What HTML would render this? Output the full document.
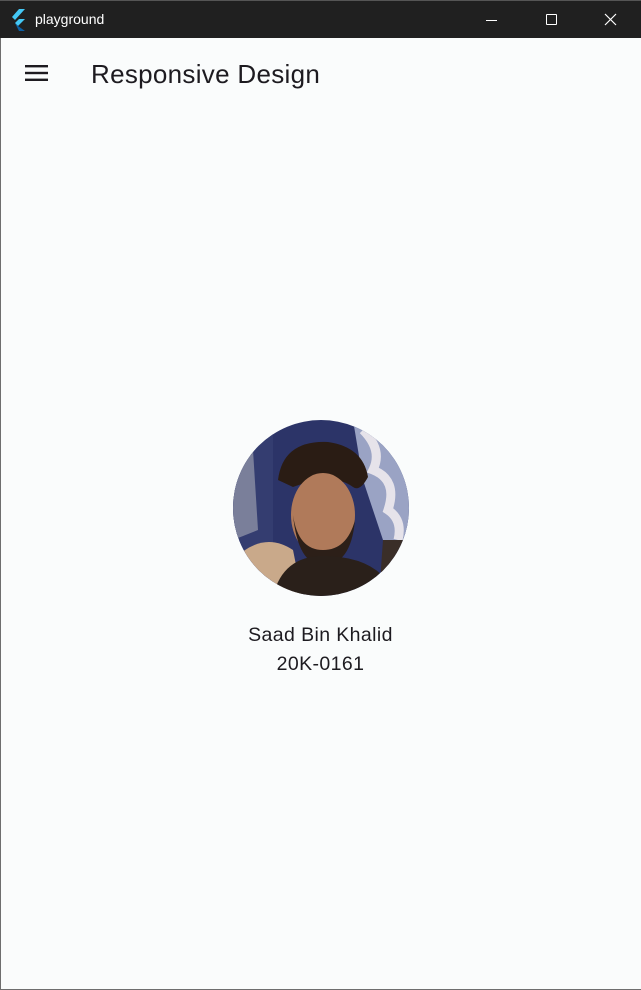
<!DOCTYPE html>
<html><head><meta charset="utf-8"><style>
*{margin:0;padding:0;box-sizing:border-box}
body{width:641px;height:990px;overflow:hidden;background:#fafcfc;font-family:"Liberation Sans",sans-serif;position:relative}
.win{position:absolute;left:0;top:0;width:641px;height:990px;border-left:1px solid #6e6e6e;border-bottom:1px solid #6e6e6e;border-top:1px solid #555}
.tb{position:absolute;left:0;top:0;width:641px;height:38px;background:#202020;border-top:1px solid #555}
.tb .t{position:absolute;left:35px;top:10px;color:#fff;font-size:14px}
.title{position:absolute;left:91px;top:59px;font-size:26px;color:#1d1b20;letter-spacing:0.3px}
.name{position:absolute;left:0;width:641px;text-align:center;font-size:19.5px;color:#1d1b20;letter-spacing:0.4px}
</style></head><body>
<div class="win"></div>
<div class="tb">
<svg style="position:absolute;left:11px;top:8px" width="18" height="22" viewBox="0 0 18 22"><polygon points="8,0 14,0 4,11 1,8" fill="#44c8f5"/><polygon points="8,10 14,10 7,17 4,14" fill="#44c8f5"/><polygon points="4,14 7,17 14,22 8,22" fill="#0b5fa3"/></svg>
<div class="t">playground</div>
<div style="position:absolute;left:486px;top:19px;width:11px;height:1px;background:#fff"></div>
<div style="position:absolute;left:546px;top:13px;width:11px;height:11px;border:1px solid #fff;border-radius:1px"></div>
<svg style="position:absolute;left:604px;top:12px" width="13" height="13"><path d="M1 1L12 12M12 1L1 12" stroke="#fff" stroke-width="1.2"/></svg>
</div>
<svg style="position:absolute;left:25px;top:65px" width="23" height="16"><rect x="0" y="0" width="23" height="2.4" fill="#1d1b20"/><rect x="0" y="6.8" width="23" height="2.4" fill="#1d1b20"/><rect x="0" y="13.6" width="23" height="2.4" fill="#1d1b20"/></svg>
<div class="title">Responsive Design</div>
<svg style="position:absolute;left:233px;top:420px" width="176" height="176" viewBox="0 0 176 176">
<defs><clipPath id="c"><circle cx="88" cy="88" r="88"/></clipPath></defs>
<g clip-path="url(#c)">
<rect width="176" height="176" fill="#2c3468"/>
<rect x="0" y="0" width="40" height="176" fill="#343d70"/>
<path d="M120 0 L176 0 L176 130 L150 120 L130 60 Z" fill="#9aa3c4"/>
<path d="M130 10 q20 20 10 40 q25 10 15 40 q15 10 10 30" stroke="#e6e3ea" stroke-width="9" fill="none"/>
<path d="M150 0 q5 30 25 40" stroke="#e0dde6" stroke-width="7" fill="none"/>
<path d="M0 40 L20 30 L25 110 L0 120Z" fill="#7a7f9a"/>
<path d="M45 60 q5 -40 50 -38 q35 5 40 35 q-8 15 -15 10 q-20 -15 -60 0 z" fill="#2a1c14"/>
<ellipse cx="90" cy="95" rx="32" ry="42" fill="#b07a5a"/>
<path d="M60 95 q5 50 30 50 q28 0 32 -45 q-8 30 -32 30 q-25 0 -30 -35z" fill="#2c1f18"/>
<path d="M0 140 q30 -30 60 -10 l10 50 l-70 0z" fill="#c9a98a"/>
<path d="M40 176 q10 -40 50 -40 q40 0 60 20 l20 20z" fill="#2a201a"/>
<path d="M150 120 l26 0 l0 56 l-30 0z" fill="#3a2e28"/>
</g></svg>
<div class="name" style="top:624px">Saad Bin Khalid</div>
<div class="name" style="top:653px">20K-0161</div>
</body></html>
